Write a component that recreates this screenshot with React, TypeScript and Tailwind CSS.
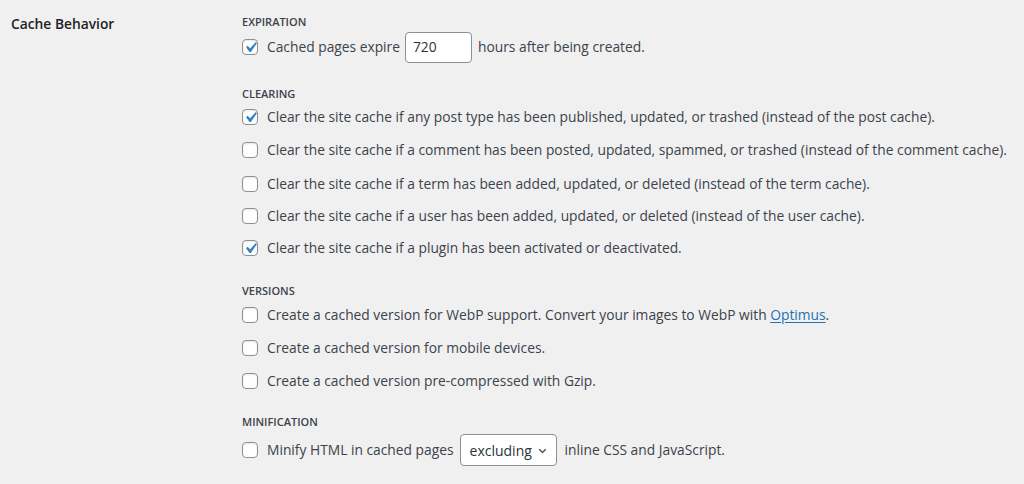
import React from "react";

const Check = () => (
  <svg
    viewBox="0 0 20 20"
    className="absolute left-[-3px] top-[-3px] w-[21px] h-[21px]"
    fill="#3582c4"
  >
    <path d="M14.83 4.89l1.34.94-5.81 8.38H9.02L5.78 9.67l1.34-1.25 2.57 2.4z" />
  </svg>
);

const Box = ({ checked }: { checked?: boolean }) => (
  <span className="relative inline-block w-[16px] h-[16px] shrink-0 rounded-[4px] border border-[#8c8f94] bg-white shadow-[inset_0_1px_2px_rgba(0,0,0,0.1)]">
    {checked && <Check />}
  </span>
);

const Row = ({
  checked,
  children,
  className = "",
}: {
  checked?: boolean;
  children: React.ReactNode;
  className?: string;
}) => (
  <div className={`flex items-center h-[24px] ${className}`}>
    <Box checked={checked} />
    <span className="ml-[9px] whitespace-nowrap">{children}</span>
  </div>
);

const Heading = ({
  children,
  className = "",
}: {
  children: React.ReactNode;
  className?: string;
}) => (
  <div
    className={`h-[16px] leading-[16px] text-[11px] font-semibold uppercase text-[#3c434a] ${className}`}
  >
    {children}
  </div>
);

export default function App() {
  return (
    <div className="w-[1024px] h-[484px] overflow-hidden bg-[#f0f0f1] text-[#3c434a] text-[13.8px] font-['Open_Sans','Noto_Sans',sans-serif]">
      <div className="flex">
        <div className="w-[242px] shrink-0 pl-[11px] pt-[14px] leading-[20px] font-semibold text-[#1d2327]">
          Cache Behavior
        </div>
        <div className="flex-1 pt-[14px]">
          <Heading>Expiration</Heading>
          <div className="flex items-center h-[32px] mt-[1px]">
            <Box checked />
            <span className="ml-[9px] whitespace-nowrap">Cached pages expire</span>
            <div className="ml-[5px] mr-[6px] w-[67px] h-[31px] rounded-[4px] border border-[#8c8f94] bg-white pl-[7px] flex items-center text-[#2c3338]">
              720
            </div>
            <span className="whitespace-nowrap">hours after being created.</span>
          </div>

          <Heading className="mt-[23px]">Clearing</Heading>
          <Row checked className="mt-[3px]">
            Clear the site cache if any post type has been published, updated, or trashed (instead of the post cache).
          </Row>
          <Row className="mt-[9px]">
            Clear the site cache if a comment has been posted, updated, spammed, or trashed (instead of the comment cache).
          </Row>
          <Row className="mt-[10px]">
            Clear the site cache if a term has been added, updated, or deleted (instead of the term cache).
          </Row>
          <Row className="mt-[8px]">
            Clear the site cache if a user has been added, updated, or deleted (instead of the user cache).
          </Row>
          <Row checked className="mt-[8px]">
            Clear the site cache if a plugin has been activated or deactivated.
          </Row>

          <Heading className="mt-[23px]">Versions</Heading>
          <Row className="mt-[4px]">
            Create a cached version for WebP support. Convert your images to WebP with{" "}
            <span className="text-[#2271b1] underline underline-offset-[2px]">Optimus</span>.
          </Row>
          <Row className="mt-[9px]">Create a cached version for mobile devices.</Row>
          <Row className="mt-[9px]">Create a cached version pre-compressed with Gzip.</Row>

          <Heading className="mt-[21px]">Minification</Heading>
          <div className="flex items-center h-[32px] mt-[4px]">
            <Box />
            <span className="ml-[9px] whitespace-nowrap">Minify HTML in cached pages</span>
            <div className="ml-[6px] mr-[8px] w-[97px] h-[32px] rounded-[4px] border border-[#8c8f94] bg-white pl-[9px] pr-[7px] flex items-center justify-between text-[#2c3338] text-[14px]">
              <span>excluding</span>
              <svg viewBox="0 0 20 20" className="w-[13px] h-[13px]" fill="none" stroke="#50575e" strokeWidth="2.4">
                <path d="M5 8l5 5 5-5" />
              </svg>
            </div>
            <span className="whitespace-nowrap">inline CSS and JavaScript.</span>
          </div>
        </div>
      </div>
    </div>
  );
}
